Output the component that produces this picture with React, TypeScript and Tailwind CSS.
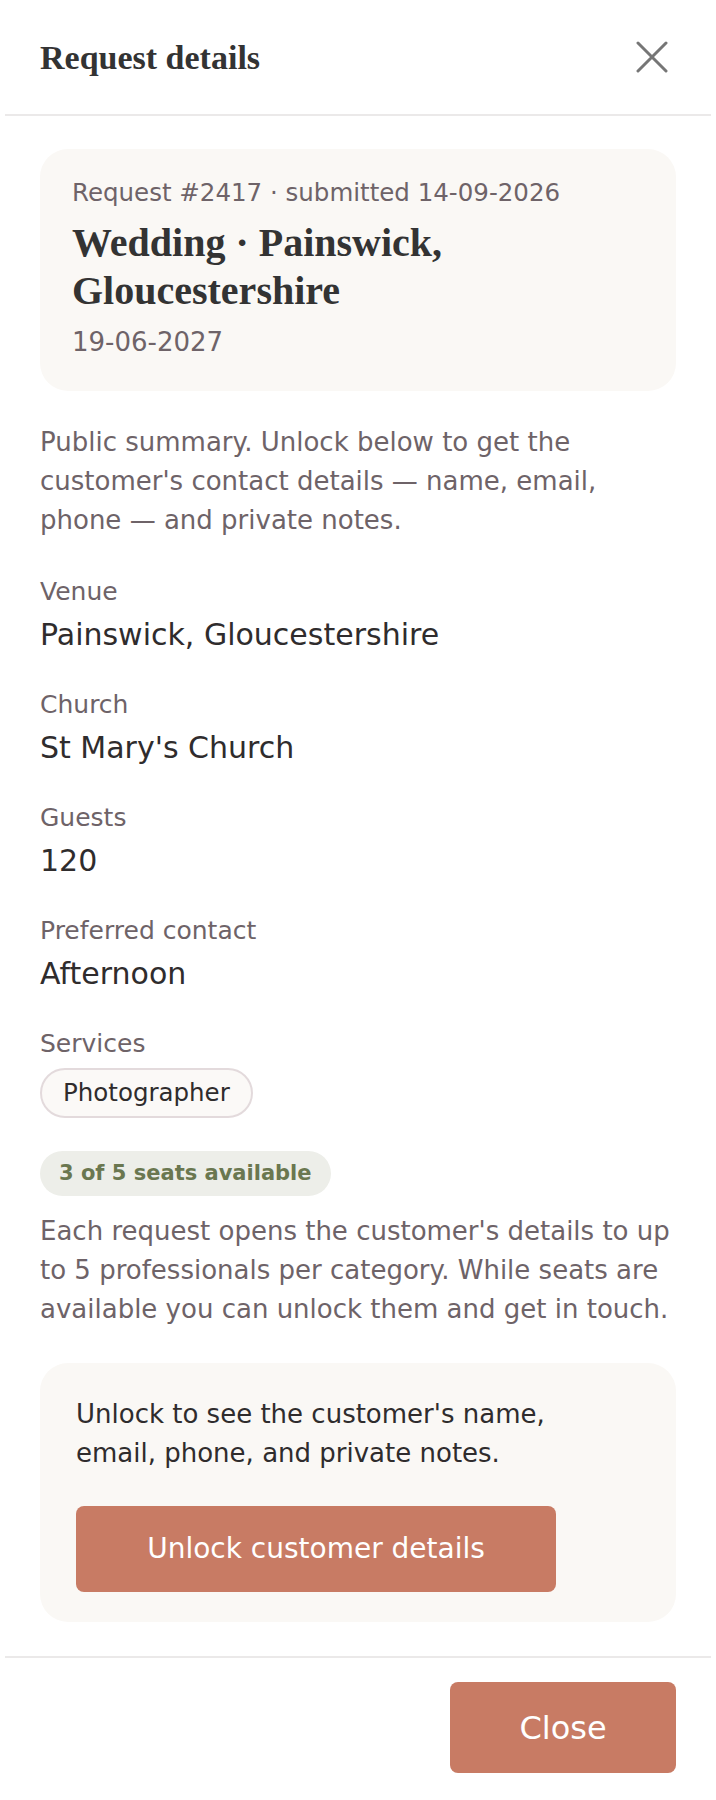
const sans = { fontFamily: '"DejaVu Sans", "Open Sans", sans-serif' };

const Field = ({ label, value }: { label: string; value: string }) => (
    <div className="flex flex-col gap-[10px]">
        <p className="text-[25px] leading-[30px] text-[#6e6368]">{label}</p>
        <p className="text-[30px] leading-[36px] text-[#2f2c2d]">{value}</p>
    </div>
);

export default function App() {
    return (
        <div className="min-h-[1800px] bg-white px-[5px] text-[#2f2c2d]" style={sans}>
            {/* Header */}
            <header className="h-[116px] flex items-center justify-between pl-[35px] pr-[43px] border-b-2 border-[#ebe9e9]">
                <h1 className="text-[34px] font-bold text-[#333] font-['Liberation_Serif',serif]">Request details</h1>
                <button className="size-8 flex items-center justify-center text-[#767676]">
                    <svg width="32" height="32" viewBox="0 0 32 32" fill="none" stroke="currentColor" strokeWidth="3" strokeLinecap="round">
                        <path d="M2 2l28 28M30 2L2 30" />
                    </svg>
                </button>
            </header>

            <main className="px-[35px] pt-[33px] pb-[34px] flex flex-col">
                {/* Summary card */}
                <div className="bg-[#faf8f5] rounded-[28px] pl-8 pr-8 pt-7 pb-[33px]">
                    <p className="text-[24.5px] leading-[32px] text-[#6e6368]">Request #2417 · submitted 14-09-2026</p>
                    <h2 className="mt-[10px] text-[40px] leading-[48px] font-bold text-[#333] font-['Liberation_Serif',serif]">
                        Wedding · Painswick,<br />Gloucestershire
                    </h2>
                    <p className="mt-[11px] text-[26px] leading-[32px] text-[#6e6368]">19-06-2027</p>
                </div>

                <p className="mt-8 text-[26px] leading-[39px] text-[#6e6368]">
                    Public summary. Unlock below to get the customer's contact details — name, email, phone — and private notes.
                </p>

                <div className="mt-[37px] flex flex-col gap-[37px]">
                    <Field label="Venue" value="Painswick, Gloucestershire" />
                    <Field label="Church" value="St Mary's Church" />
                    <Field label="Guests" value="120" />
                    <Field label="Preferred contact" value="Afternoon" />
                    <div className="flex flex-col gap-[9px]">
                        <p className="text-[25px] leading-[30px] text-[#6e6368]">Services</p>
                        <div className="flex">
                            <span className="h-[50px] px-[21px] flex items-center rounded-full border-2 border-[#e3dadc] bg-[#fbf9f7] text-[24.5px] text-[#2f2c2d]">
                                Photographer
                            </span>
                        </div>
                    </div>
                </div>

                <div className="mt-[33px] flex">
                    <span className="h-[45px] px-[19px] flex items-center rounded-full bg-[#edeee9] text-[21px] font-bold text-[#6a7750]">
                        3 of 5 seats available
                    </span>
                </div>
                <p className="mt-[16px] text-[26px] leading-[39px] text-[#6e6368]">
                    Each request opens the customer's details to up to 5 professionals per category. While seats are available you can unlock them and get in touch.
                </p>

                {/* Unlock card */}
                <div className="mt-[34px] bg-[#faf8f5] rounded-[28px] pl-9 pr-9 pt-8 pb-[30px]">
                    <div className="max-w-[500px]">
                        <p className="text-[26px] leading-[39px] text-[#2f2c2d]">
                            Unlock to see the customer's name, email, phone, and private notes.
                        </p>
                        <button className="mt-[33px] w-[480px] h-[86px] rounded-[8px] bg-[#c87b64] text-white text-[28px]">
                            Unlock customer details
                        </button>
                    </div>
                </div>
            </main>

            {/* Footer */}
            <footer className="border-t-2 border-[#ebe9e9] pt-6 pb-[27px] pl-[35px] pr-[35px] flex justify-end">
                <button className="w-[226px] h-[91px] rounded-[8px] bg-[#c87b64] text-white text-[32px]">Close</button>
            </footer>
        </div>
    );
}
